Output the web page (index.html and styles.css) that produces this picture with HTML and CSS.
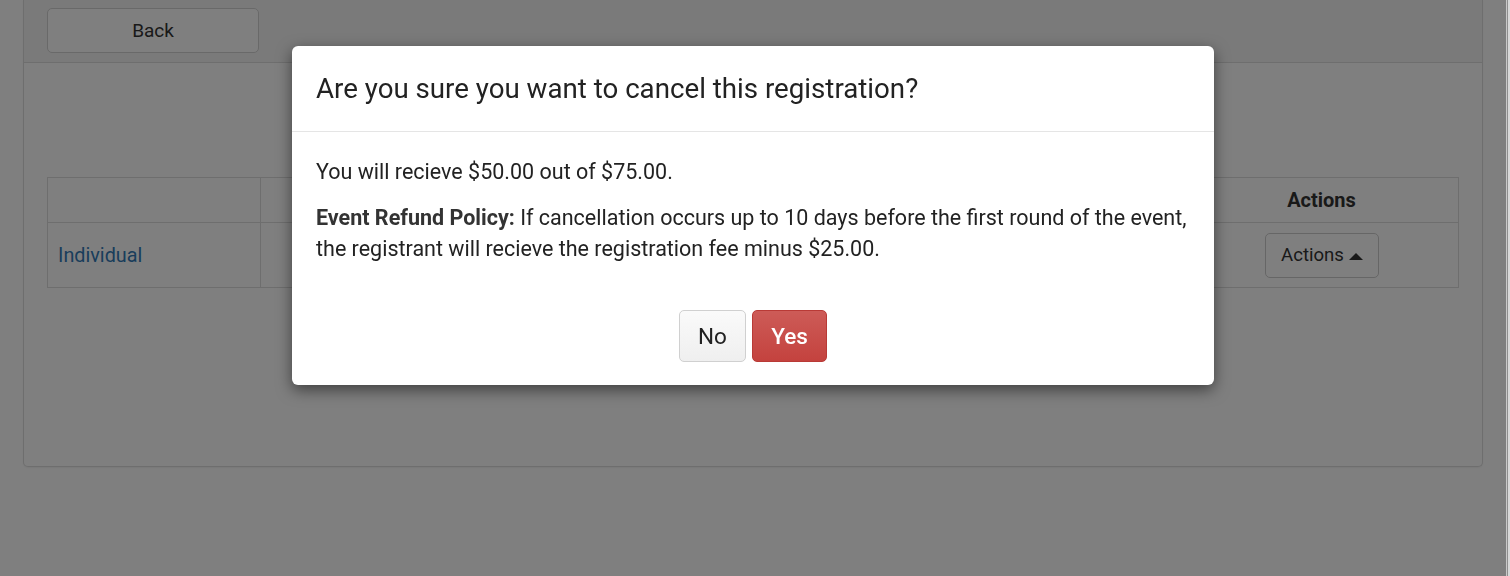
FILE: index.html
```html
<!DOCTYPE html>
<html lang="en">
<head>
<meta charset="utf-8">
<title>Cancel registration</title>
<link rel="stylesheet" href="styles.css">
</head>
<body>
<div class="page">
  <div class="panel">
    <div class="panel-heading">
      <button class="btn btn-back">Back</button>
    </div>
    <div class="panel-body">
      <table class="table">
        <thead>
          <tr>
            <th class="col-type"></th>
            <th class="col-mid"></th>
            <th class="col-actions">Actions</th>
          </tr>
        </thead>
        <tbody>
          <tr>
            <td class="col-type"><a class="link" href="#">Individual</a></td>
            <td class="col-mid"></td>
            <td class="col-actions"><button class="btn btn-actions">Actions <span class="caret"></span></button></td>
          </tr>
        </tbody>
      </table>
    </div>
  </div>
</div>
<div class="backdrop"></div>
<div class="window-edge"></div>
<div class="modal">
  <div class="modal-header">
    <h4 class="modal-title">Are you sure you want to cancel this registration?</h4>
  </div>
  <div class="modal-body">
    <p>You will recieve $50.00 out of $75.00.</p>
    <p><strong>Event Refund Policy:</strong> If cancellation occurs up to 10 days before the first round of the event, the registrant will recieve the registration fee minus $25.00.</p>
  </div>
  <div class="modal-footer">
    <button class="btn btn-no">No</button>
    <button class="btn btn-yes">Yes</button>
  </div>
</div>
</body>
</html>
```

FILE: styles.css
```css
* { box-sizing: border-box; }
html, body { margin: 0; padding: 0; }
body {
  font-family: Roboto, "Liberation Sans", Arial, sans-serif;
  font-size: 18.6px;
  color: #333;
  background: #fff;
  height: 576px;
  overflow: hidden;
}
.page {
  padding: 0 27px 0 23px;
}
.panel {
  border: 1px solid #dcdcdc;
  border-top: none;
  border-radius: 0 0 5px 5px;
  background: #fff;
  box-shadow: 0 1px 2px rgba(0,0,0,0.06);
}
.panel-heading {
  background: #f5f5f5;
  border-bottom: 1px solid #dcdcdc;
  padding: 8px 23px 9px;
}
.btn {
  font-family: Roboto, "Liberation Sans", Arial, sans-serif;
  font-size: 18.6px;
  color: #333;
  background: #fff;
  border: 1px solid #ccc;
  border-radius: 5px;
  cursor: pointer;
  line-height: 1;
}
.btn-back {
  width: 212px;
  height: 45px;
  font-size: 19px;
  background: #fff;
  border-color: #d2d2d2;
}
.panel-body {
  padding: 114px 23px 178px;
}
.table {
  width: 100%;
  border-collapse: collapse;
  border: 1px solid #ddd;
}
.table th, .table td {
  border: 1px solid #ddd;
  padding: 0 10px;
}
.table th {
  height: 45px;
  font-size: 20px;
  font-weight: 700;
  text-align: center;
  padding-bottom: 1px;
}
.table td {
  height: 65px;
}
.col-type { width: 213px; text-align: left; }
.col-actions { width: 274px; text-align: center; }
.link {
  color: #337ab7;
  text-decoration: none;
  font-size: 19.8px;
}
.btn-actions {
  width: 114px;
  height: 45px;
  padding: 0 0 0 1px;
  display: inline-flex;
  align-items: center;
  justify-content: center;
  gap: 5px;
}
.caret {
  display: inline-block;
  width: 0;
  height: 0;
  border-left: 7px solid transparent;
  border-right: 7px solid transparent;
  border-bottom: 7px solid #333;
  margin-top: 2px;
}
.backdrop {
  position: fixed;
  inset: 0;
  background: rgba(0,0,0,0.5);
}
.window-edge {
  position: fixed;
  top: 0;
  right: 0;
  bottom: 0;
  width: 4px;
  background: linear-gradient(to right, #c9c9c9 0, #c9c9c9 1px, #8f8f8f 1px, #8f8f8f 2px, #d9d9d9 2px);
}
.modal {
  position: absolute;
  left: 292px;
  top: 46px;
  width: 922px;
  background: #fff;
  border-radius: 6px;
  box-shadow: 0 5px 15px rgba(0,0,0,0.5);
}
.modal-header {
  padding: 26px 24px 25px;
  border-bottom: 1px solid #e5e5e5;
}
.modal-title {
  margin: 0;
  font-size: 27.7px;
  font-weight: 400;
  line-height: 34px;
  color: #222;
}
.modal-body {
  padding: 24px 24px 9px;
}
.modal-body p {
  margin: 0 0 15px;
  font-size: 21.5px;
  line-height: 31px;
  color: #222;
}
.modal-body strong { font-weight: 700; color: #333; }
.modal-footer {
  display: flex;
  justify-content: center;
  gap: 6px;
  padding: 22px 24px 23px;
}
.btn-no, .btn-yes {
  height: 52px;
  font-size: 22.5px;
  padding: 0;
}
.btn-no {
  width: 67px;
  color: #222;
  background: linear-gradient(#fafafa, #efefef);
  border-color: #d0d0d0;
}
.btn-yes {
  width: 75px;
  color: #fff;
  font-weight: 500;
  background: linear-gradient(#cd5b57, #c4423e);
  border-color: #b93a36;
}
```
